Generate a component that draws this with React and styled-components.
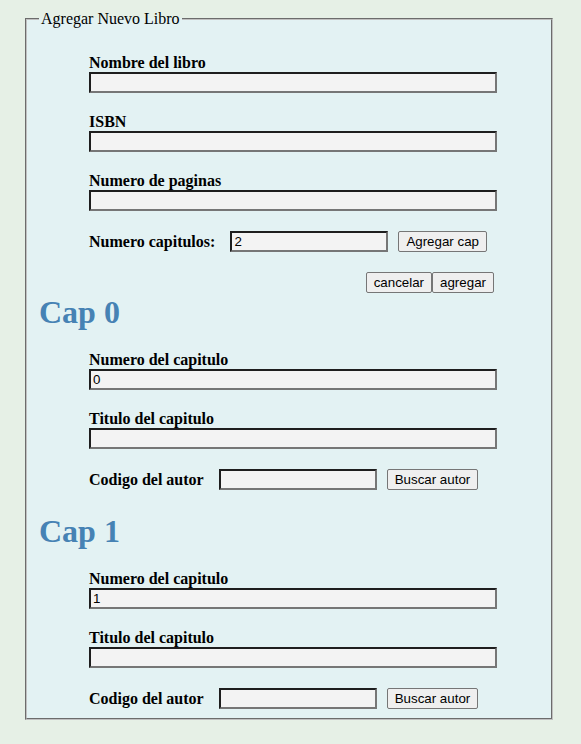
import React, { useState } from "react";
import styled, { createGlobalStyle } from "styled-components";

const GlobalStyle = createGlobalStyle`
  html, body {
    margin: 0;
    padding: 0;
    background-color: #e6f0e6;
  }
  body {
    font-family: "Liberation Serif", "Times New Roman", serif;
    font-size: 16px;
    color: #000;
  }
`;

const App = () => {
  const [state, setState] = useState({
    nombre: "",
    isbn: "",
    paginas: "",
    capitulos: "2",
  });

  const chapters = [...Array(Number(state.capitulos) || 0)].map((c, i) => i);

  const handleChange = (event) => {
    const { name, value } = event.target;
    setState({ ...state, [name]: value });
  };

  return (
    <>
      <GlobalStyle />
      <PageContainer>
        <FormFieldset>
          <Legend>Agregar Nuevo Libro</Legend>

          <BookSection>
            <Field>
              <Label>Nombre del libro</Label>
              <TextInput name="nombre" value={state.nombre} onChange={handleChange} />
            </Field>
            <Field>
              <Label>ISBN</Label>
              <TextInput name="isbn" value={state.isbn} onChange={handleChange} />
            </Field>
            <Field>
              <Label>Numero de paginas</Label>
              <TextInput name="paginas" value={state.paginas} onChange={handleChange} />
            </Field>
            <InlineRow>
              <InlineLabel>Numero capitulos:</InlineLabel>
              <TextInput
                small
                name="capitulos"
                value={state.capitulos}
                onChange={handleChange}
              />
              <Button>Agregar cap</Button>
            </InlineRow>
            <ActionsRow>
              <Button>cancelar</Button>
              <Button>agregar</Button>
            </ActionsRow>
          </BookSection>

          <ChapterList>
            {chapters.map((index) => (
              <Chapter key={index}>
                <ChapterTitle>Cap {index}</ChapterTitle>
                <ChapterFields>
                  <Field>
                    <Label>Numero del capitulo</Label>
                    <TextInput defaultValue={index} />
                  </Field>
                  <Field>
                    <Label>Titulo del capitulo</Label>
                    <TextInput />
                  </Field>
                  <InlineRow>
                    <InlineLabel>Codigo del autor</InlineLabel>
                    <TextInput small />
                    <Button>Buscar autor</Button>
                  </InlineRow>
                </ChapterFields>
              </Chapter>
            ))}
          </ChapterList>
        </FormFieldset>
      </PageContainer>
    </>
  );
};

export default App;

const PageContainer = styled.div`
  padding: 10px 28px 24px 25px;
  min-height: 100vh;
  box-sizing: border-box;
`;

const FormFieldset = styled.fieldset`
  margin: 0;
  padding: 0 12px 9px;
  border: 2px groove #c0c0c0;
  background-color: #e3f2f3;
`;

const Legend = styled.legend`
  padding: 0 2px;
  font-size: 16px;
  line-height: 18px;
`;

const BookSection = styled.div`
  display: flex;
  flex-direction: column;
  gap: 20px;
  padding: 26px 0 0 50px;
`;

const Field = styled.div`
  display: flex;
  flex-direction: column;
  align-items: flex-start;
`;

const Label = styled.label`
  display: block;
  font-weight: bold;
  line-height: 18px;
`;

const InlineRow = styled.div`
  display: flex;
  align-items: center;
  height: 21px;
`;

const InlineLabel = styled.label`
  font-weight: bold;
  line-height: 18px;
  margin-right: 15px;
`;

const TextInput = styled.input`
  box-sizing: border-box;
  width: ${(props) => (props.small ? "158px" : "408px")};
  height: 21px;
  margin: 0;
  padding: 1px 2px;
  border-width: 2px;
  border-style: solid;
  border-color: #1e1e1e #767676 #767676 #1e1e1e;
  background-color: #f3f3f3;
  font-family: "Liberation Sans", Arial, sans-serif;
  font-size: 13.33px;
  color: #000;
  outline: none;

  & + button {
    margin-left: 10px;
  }
`;

const ActionsRow = styled.div`
  display: flex;
  justify-content: flex-end;
  width: 405px;
`;

const Button = styled.button`
  box-sizing: border-box;
  height: 21px;
  margin: 0;
  padding: 1px 7px;
  border: 1px solid #767676;
  border-radius: 2px;
  background-color: #efefef;
  font-family: "Liberation Sans", Arial, sans-serif;
  font-size: 13.33px;
  color: #000;
  cursor: pointer;

  &:hover {
    background-color: #e5e5e5;
  }
`;

const ChapterList = styled.div`
  display: flex;
  flex-direction: column;
  gap: 22px;
`;

const Chapter = styled.section`
  display: flex;
  flex-direction: column;
`;

const ChapterTitle = styled.h1`
  margin: 1px 0 0;
  font-size: 32px;
  line-height: 37px;
  font-weight: bold;
  color: #4682b4;
`;

const ChapterFields = styled.div`
  display: flex;
  flex-direction: column;
  gap: 20px;
  padding: 20px 0 0 50px;
`;
